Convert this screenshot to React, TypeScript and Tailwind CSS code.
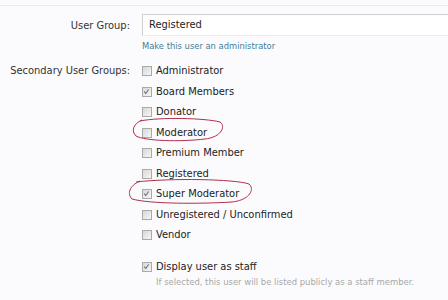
import React from 'react';

const groups = [
  { name: 'Administrator', checked: false },
  { name: 'Board Members', checked: true },
  { name: 'Donator', checked: false },
  { name: 'Moderator', checked: false },
  { name: 'Premium Member', checked: false },
  { name: 'Registered', checked: false },
  { name: 'Super Moderator', checked: true },
  { name: 'Unregistered / Unconfirmed', checked: false },
  { name: 'Vendor', checked: false },
];

function Box({ checked }: { checked: boolean }) {
  return (
    <span className="relative w-[10px] h-[10px] shrink-0 border border-[#a9a9a9] bg-gradient-to-br from-[#d8d8d8] to-[#f6f6f6]">
      {checked && (
        <svg viewBox="0 0 10 10" className="absolute left-0 top-0 w-[8px] h-[8px]">
          <path d="M1.5 4.5 L3.5 6.8 L7 1.8" fill="none" stroke="#6b6b6b" strokeWidth="1.3" />
        </svg>
      )}
    </span>
  );
}

export default function App() {
  return (
    <div className="relative w-[448px] h-[300px] overflow-hidden bg-[#fbfbfd] text-[11px] text-[#333] font-['DejaVu_Sans_Condensed','DejaVu_Sans',sans-serif]">
      <div className="h-[6px] border-b border-[#e4edf1]" />
      <div className="grid grid-cols-[130px_1fr] gap-x-[12px] pt-[8px]">
        <div className="text-right pt-[5px] leading-[14px] whitespace-nowrap">User Group:</div>
        <div>
          <div className="h-[22px] border border-[#cfcfcf] border-r-0 border-b-[#ececec] bg-white pl-[6px] leading-[20px] text-[#222]">
            Registered
          </div>
          <div className="mt-[3px] text-[9.3px] text-[#3f7d96] leading-[13px]">Make this user an administrator</div>
        </div>

        <div className="text-right pt-[12px] leading-[14px] whitespace-nowrap">Secondary User Groups:</div>
        <div className="pt-[12px] flex flex-col gap-[6.5px]">
          {groups.map((g) => (
            <label key={g.name} className="flex items-center gap-[4px] leading-[14px] text-[#222]">
              <Box checked={g.checked} />
              <span>{g.name}</span>
            </label>
          ))}
          <div className="mt-[11px]">
            <label className="flex items-center gap-[4px] leading-[14px] text-[#222]">
              <Box checked />
              <span>Display user as staff</span>
            </label>
            <div className="pl-[14px] mt-[1px] text-[9.4px] text-[#a8a8a8] leading-[13px]">
              If selected, this user will be listed publicly as a staff member.
            </div>
          </div>
        </div>
      </div>

      <svg className="absolute left-0 top-0 pointer-events-none" width="448" height="300">
        <path d="M140 121 C 160 117, 205 118, 220 122 C 226 126, 222 137, 205 139 C 180 142, 145 141, 136 136 C 131 131, 133 124, 142 120" fill="none" stroke="#b03048" strokeWidth="1" />
        <path d="M136 182 C 170 178, 235 179, 249 184 C 255 189, 250 200, 232 202 C 200 204, 150 204, 132 199 C 127 194, 129 186, 140 181" fill="none" stroke="#b03048" strokeWidth="1" />
      </svg>
    </div>
  );
}
